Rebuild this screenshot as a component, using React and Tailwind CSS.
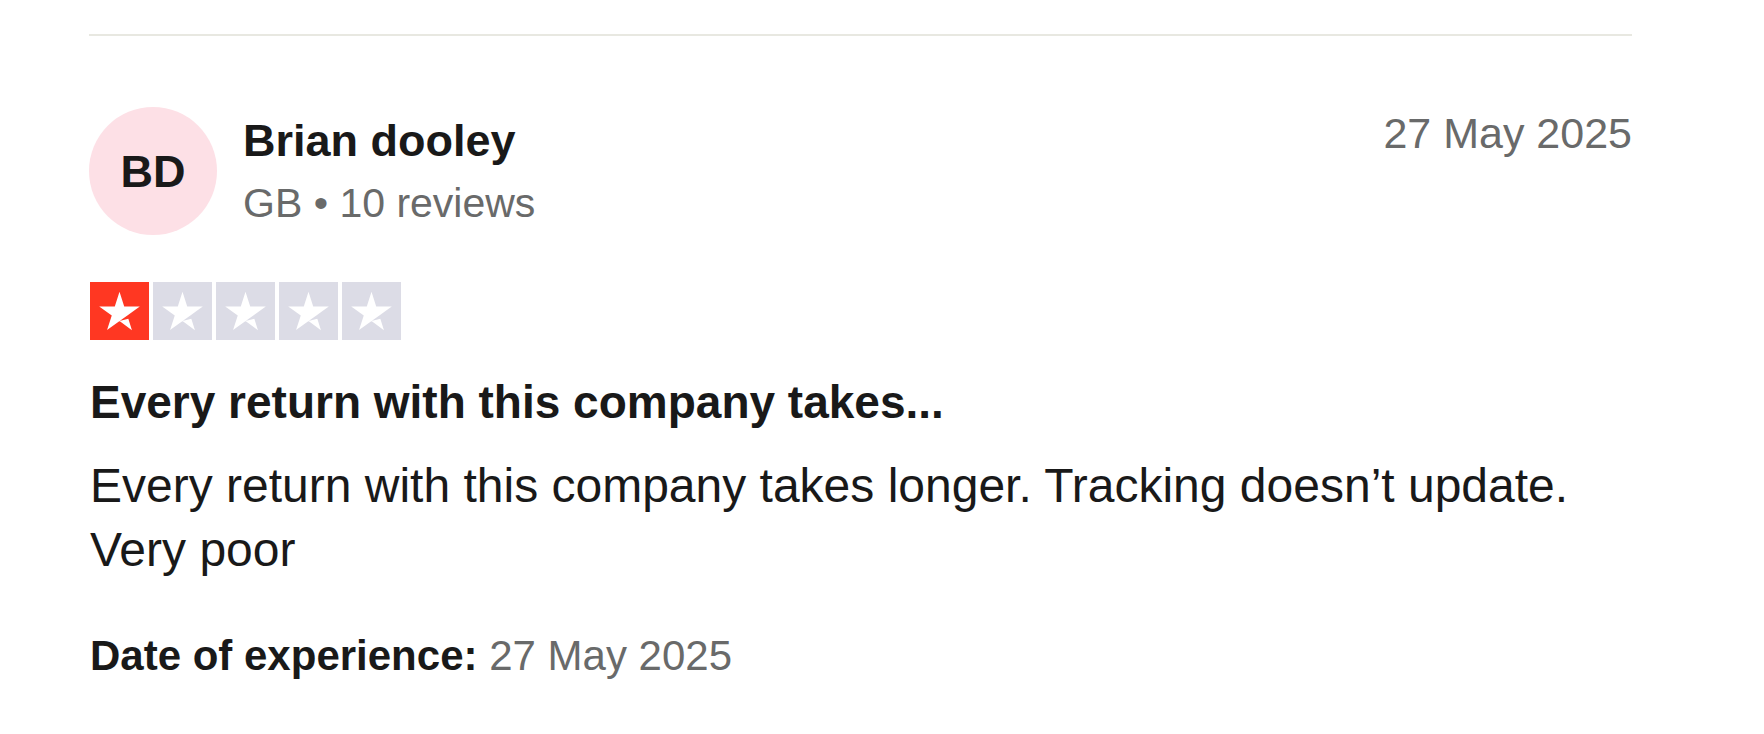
import React from "react";

const review = {
  initials: "BD",
  name: "Brian dooley",
  country: "GB",
  reviews: 10,
  date: "27 May 2025",
  rating: 1,
  title: "Every return with this company takes...",
  body: "Every return with this company takes longer. Tracking doesn’t update. Very poor",
  experience: "27 May 2025",
};

function Star({ filled }) {
  return (
    <div
      className={
        "w-[59px] h-[58px] flex items-center justify-center " +
        (filled ? "bg-[#ff3722]" : "bg-[#dcdce6]")
      }
    >
      <svg viewBox="0 0 48 48" className="w-[59px] h-[58px]">
        {/* trustpilot style star with notch on the right leg */}
        <path
          fill="#fff"
          d="M24 32.3l7.3-1.8 3 9.4L24 32.3zm16.8-12.1H27.9L24 8.1l-3.9 12.1H7.2l10.4 7.5-3.9 12.1 10.4-7.5 6.4-4.6 10.3-7.4z"
        />
      </svg>
    </div>
  );
}

export default function App() {
  return (
    <div className="min-h-screen bg-white pl-[89px] pr-[132px] font-['Liberation_Sans',Arial,sans-serif] text-[#191919]">
      {/* DIVIDER */}
      <div className="pt-[34px]">
        <div className="h-[2px] bg-[#e8e8e1]" />
      </div>

      {/* HEADER */}
      <div className="mt-[71px] flex items-start justify-between">
        <div className="flex items-start gap-[26px]">
          <div className="w-[128px] h-[128px] rounded-full bg-[#fde0e6] flex items-center justify-center shrink-0">
            <span className="text-[45px] font-bold leading-none">
              {review.initials}
            </span>
          </div>
          <div className="pt-[7px]">
            <div className="text-[45px] leading-[54px] font-bold">{review.name}</div>
            <div className="mt-[10px] text-[41px] leading-[50px] text-[#696a6a]">
              {review.country} • {review.reviews} reviews
            </div>
          </div>
        </div>
        <div className="text-[43px] leading-[52px] text-[#696a6a]">{review.date}</div>
      </div>

      {/* RATING */}
      <div className="mt-[47px] ml-[1px] flex gap-[4px]">
        {[1, 2, 3, 4, 5].map((i) => (
          <Star key={i} filled={i <= review.rating} />
        ))}
      </div>

      {/* CONTENT */}
      <h2 className="mt-[35px] ml-[1px] text-[46px] leading-[54px] font-bold">{review.title}</h2>
      <p className="mt-[25px] ml-[1px] text-[48px] leading-[64px]">{review.body}</p>

      <p className="mt-[48px] ml-[1px] text-[42px] leading-[52px]">
        <span className="font-bold">Date of experience:</span>{" "}
        <span className="text-[#696a6a]">{review.experience}</span>
      </p>
    </div>
  );
}
